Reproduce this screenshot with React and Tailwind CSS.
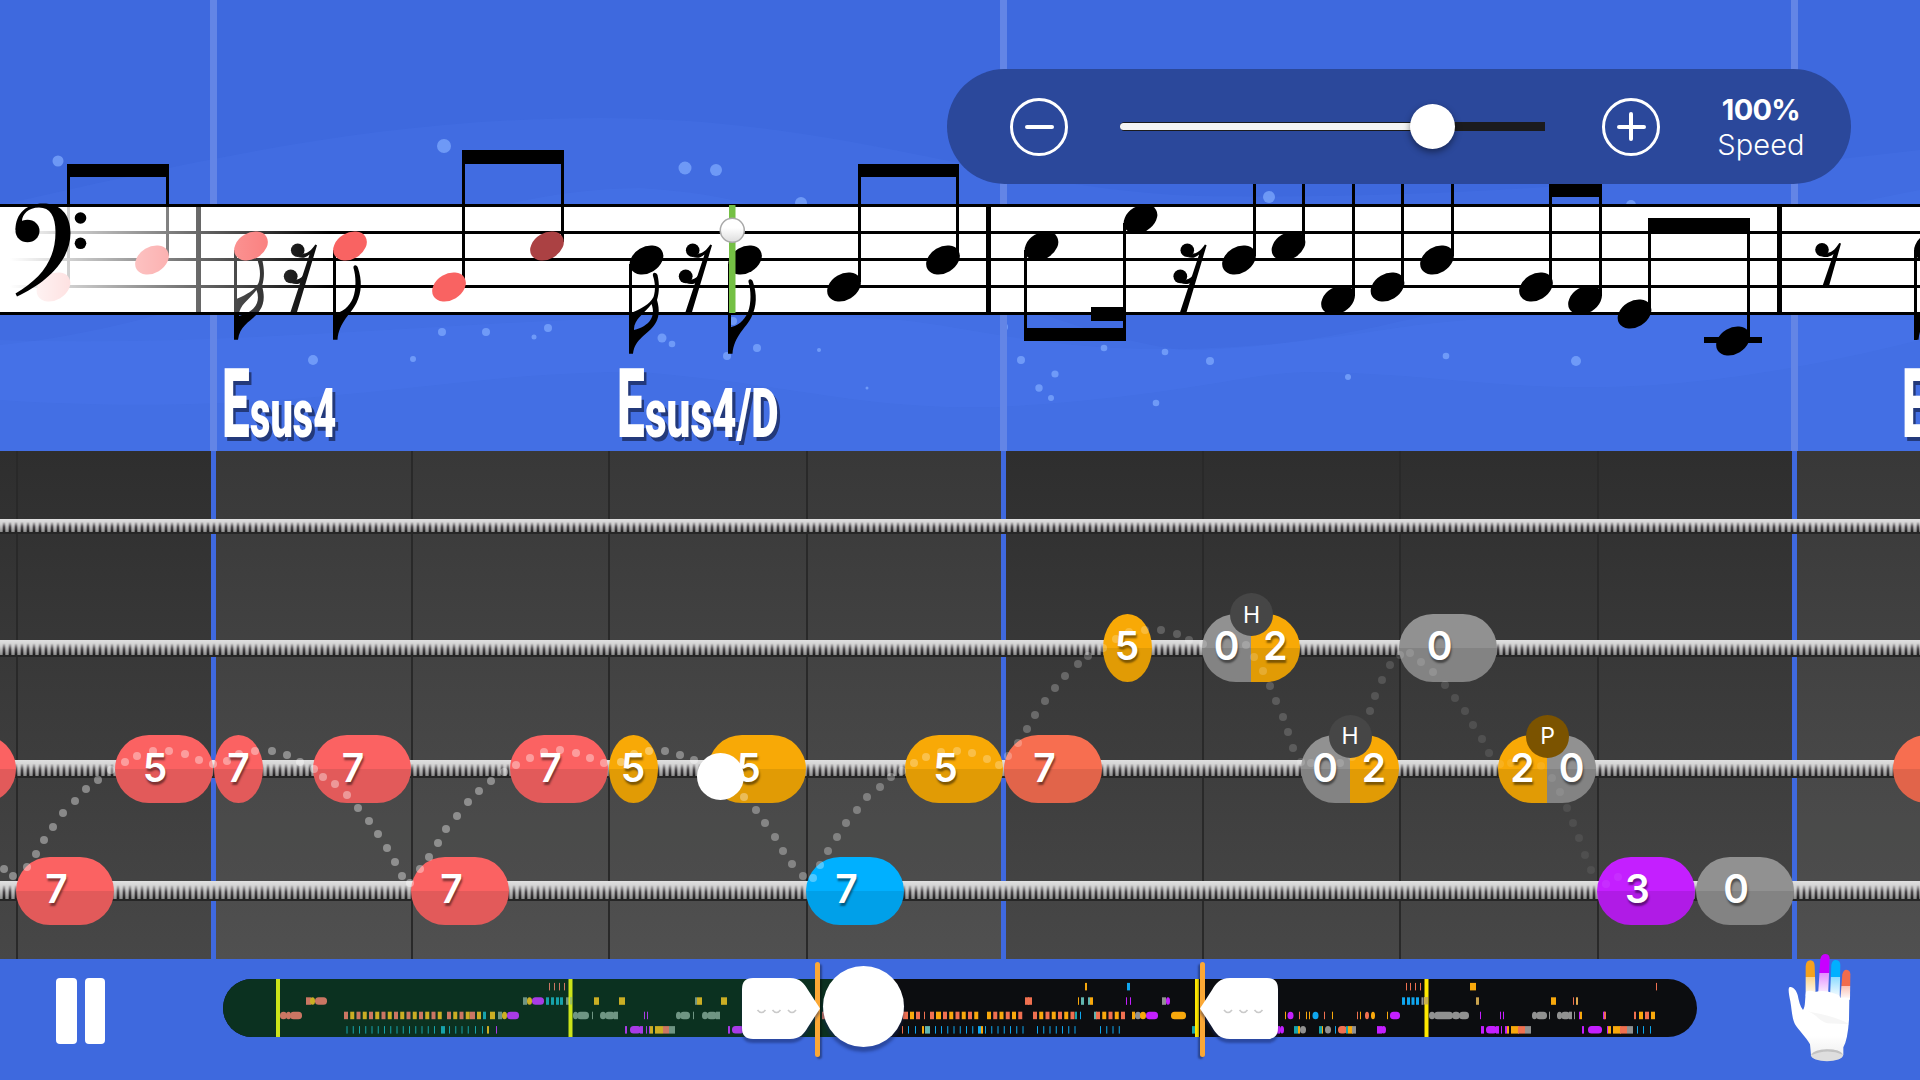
import { clsx } from "clsx";

const RED = "bg-[linear-gradient(#fb6262_50%,#e25a5a_50%)]";
const ORANGE = "bg-[linear-gradient(#f8a906_50%,#e19b05_50%)]";
const CORAL = "bg-[linear-gradient(#f76e50_50%,#e1644a_50%)]";
const BLUE = "bg-[linear-gradient(#00b0ff_50%,#00a0e9_50%)]";
const PURPLE = "bg-[linear-gradient(#c41fff_50%,#b01be6_50%)]";
const GREY = "bg-[linear-gradient(#919191_50%,#838383_50%)]";

// one entry per string, thinnest first
const strings = [
  { size: "h-[15px]", notes: [] },
  {
    size: "h-[17px]",
    notes: [
      { x: 1102.5, short: true, parts: [["5", ORANGE]] },
      { x: 1202, parts: [["0", GREY], ["2", ORANGE]], badge: "H" },
      { x: 1399, parts: [["0", GREY]] },
    ],
  },
  {
    size: "h-[18px]",
    notes: [
      { x: -82.5, parts: [["", RED]] },
      { x: 114.5, parts: [["5", RED]] },
      { x: 214, short: true, parts: [["7", RED]] },
      { x: 312.5, parts: [["7", RED]] },
      { x: 510, parts: [["7", RED]] },
      { x: 608.5, short: true, parts: [["5", ORANGE]] },
      { x: 708, parts: [["5", ORANGE]] },
      { x: 905, parts: [["5", ORANGE]] },
      { x: 1004, parts: [["7", CORAL]] },
      { x: 1300.5, parts: [["0", GREY], ["2", ORANGE]], badge: "H" },
      { x: 1498, parts: [["2", ORANGE], ["0", GREY]], badge: "P" },
      { x: 1893, parts: [["", CORAL]] },
    ],
  },
  {
    size: "h-[20px]",
    notes: [
      { x: 16, parts: [["7", RED]] },
      { x: 411, parts: [["7", RED]] },
      { x: 806, parts: [["7", BLUE]] },
      { x: 1597, parts: [["3", PURPLE]] },
      { x: 1695.5, parts: [["0", GREY]] },
    ],
  },
];

const hops = [
  [4, 869], [13, 876], [27, 867], [36, 854], [44, 840], [53, 827], [63, 813], [75, 801], [86, 789], [98, 780],
  [111, 770], [125, 762], [137, 756], [153, 751], [169, 751], [185, 754], [199, 760], [213, 764], [227, 761],
  [239, 754], [255, 751], [272, 751], [287, 755], [300, 762], [314, 769], [323, 777], [335, 784], [347, 795],
  [358, 808], [369, 821], [378, 834], [387, 848], [395, 862], [402, 876], [410, 883], [420, 869], [429, 857],
  [438, 843], [446, 829], [457, 816], [468, 802], [479, 791], [491, 781], [504, 772], [516, 765], [530, 758],
  [544, 752], [560, 750], [576, 753], [590, 758], [604, 763], [621, 762], [634, 754], [649, 751], [665, 751],
  [680, 755], [694, 760], [744, 797], [756, 810], [765, 823], [775, 837], [783, 851], [792, 864], [803, 876],
  [813, 878], [820, 865], [828, 851], [837, 837], [846, 823], [857, 810], [867, 797], [880, 787], [891, 777],
  [902, 771], [914, 763], [926, 757], [941, 752], [957, 751], [972, 753], [987, 759], [999, 765], [1008, 756],
  [1018, 743], [1027, 729], [1035, 715], [1045, 701], [1055, 688], [1065, 676], [1078, 664], [1088, 656],
  [1103, 648], [1116, 639], [1129, 632], [1145, 630], [1161, 630], [1177, 634], [1189, 640], [1203, 644],
  [1246, 645], [1254, 657], [1263, 671], [1270, 686], [1276, 701], [1283, 717], [1288, 732], [1293, 748],
  [1301, 762], [1311, 763], [1340, 763], [1352, 757], [1358, 743], [1364, 727], [1370, 711], [1375, 696],
  [1382, 680], [1390, 665], [1400, 655], [1410, 653], [1421, 662], [1433, 672], [1445, 685], [1455, 698],
  [1465, 711], [1473, 725], [1482, 739], [1489, 753], [1500, 764], [1511, 763], [1541, 766], [1552, 778],
  [1560, 792], [1567, 808], [1573, 823], [1579, 838], [1585, 855], [1591, 870], [1606, 884], [1618, 877],
];

const bubbles = [
  [58, 161, 5.5], [444, 146, 7], [442, 332, 4], [486, 332, 4], [548, 328, 4], [534, 337, 2.5], [313, 360, 5],
  [413, 359, 3], [685, 168, 6.5], [716, 170, 6], [801, 203, 6], [662, 338, 4.5], [672, 344, 3.3], [757, 348, 4],
  [819, 350, 2], [733, 321, 4], [727, 356, 4], [867, 388, 1.5], [1004, 327, 4], [1021, 360, 4], [1039, 388, 3.7],
  [1269, 197, 6], [1104, 348, 3.3], [1165, 352, 3.3], [1210, 361, 4], [1055, 374, 3.6], [1051, 398, 3],
  [1156, 403, 3.3], [1348, 377, 3], [1446, 356, 3.3], [1576, 361, 5], [1631, 205, 5],
];

const heads = [
  [53.5, 287, "#f96362"], [152, 260, "#f96362"], [251, 246, "#f96362"], [350, 246, "#f96362"],
  [449, 287, "#f96362"], [547, 246, "#ab4143"], [646.5, 260], [745, 260], [844, 287], [943, 260],
  [1041.5, 246], [1140.5, 219], [1239, 260], [1288.5, 246], [1338, 300], [1387.5, 287], [1437, 260],
  [1536, 287], [1585, 300], [1634.5, 314], [1733, 341], [1931, 246],
];

// [x, top, bottom]
const stems = [
  [68.5, 165, 282], [167.5, 165, 256], [235.5, 250, 330], [334.5, 250, 330], [463.5, 151, 282], [562.5, 151, 242],
  [630.5, 264, 340], [729.5, 264, 340], [859.5, 165, 282], [957.5, 165, 256], [1025.5, 250, 340], [1124.5, 223, 340],
  [1254.5, 150, 256], [1303.5, 150, 242], [1353.5, 150, 296], [1402.5, 150, 282], [1452.5, 150, 256],
  [1550.5, 184, 282], [1600.5, 184, 296], [1649.5, 220, 310], [1748.5, 220, 337], [1915.5, 250, 340],
];

// [x, y, width, height]
const beams = [
  [67, 164, 102, 13], [462, 150, 102, 14], [858, 164, 101, 13], [1024, 328, 102, 13], [1091, 307, 35, 14],
  [1549, 184, 53, 13], [1648, 218, 102, 15.5], [1704, 337, 58, 6],
];

const C = "#cb7663", Y = "#cbae24", T = "#17a3ab", P = "#a83be6", G = "#6f9583";
const c = "#f07050", y = "#f8a80c", b = "#0fa6ef", p = "#c41fff", g = "#919191";

// overview map blocks: [row, x, width, colour, rounded]
const blocks = [
  [3, 280, 7, C, 1], [3, 286, 5, C, 1], [3, 290, 12, C, 1], [2, 306, 5, C], [2, 310, 5, Y, 1], [2, 315, 12, C, 1],
  [3, 470, 5, C], [3, 477, 4, Y], [3, 483, 3, T], [3, 490, 5, Y], [3, 498, 4, G], [3, 502, 5, Y, 1],
  [3, 507, 12, P, 1], [4, 441, 4, T], [4, 475, 1, T], [4, 482, 1, T], [4, 487, 2, Y], [4, 496, 1, P],
  [2, 523, 4, G], [2, 527, 5, Y, 1], [2, 532, 12, P, 1], [2, 546, 3, T], [2, 551, 3, T], [2, 556, 3, T],
  [2, 560, 3, T], [2, 566, 3, G], [1, 549, 1, C], [1, 554, 1, C], [1, 559, 1, C], [1, 564, 1, C],
  [3, 573, 5, G, 1], [3, 577, 12, G, 1], [3, 592, 1, G], [3, 600, 6, G, 1], [3, 605, 10, G, 1], [3, 614, 4, G],
  [3, 676, 5, G, 1], [3, 680, 10, G, 1], [3, 693, 1, G], [3, 702, 6, G, 1], [3, 707, 10, G, 1], [3, 716, 4, G],
  [3, 644, 1, P], [3, 647, 1, P], [2, 594, 5, Y], [2, 619, 6, Y], [2, 695, 2, G], [2, 697, 5, Y], [2, 721, 6, Y],
  [4, 625, 2, P], [4, 630, 11, P, 1], [4, 640, 3, P], [4, 646, 1, P], [4, 649, 1, P], [4, 650, 3, Y],
  [4, 655, 8, Y], [4, 663, 6, C], [4, 669, 6, G], [4, 728, 2, P], [4, 732, 12, P, 1], [3, 822, 3, C], [4, 815, 2, C],
  [3, 903, 5, c], [3, 910, 4, y], [3, 916, 4, c], [3, 924, 1, c], [3, 930, 4, c], [3, 936, 5, y],
  [4, 902, 1, c], [4, 908, 1, b], [4, 915, 1, b], [4, 922, 2, y], [4, 925, 5, "#62b6b0"], [4, 935, 1, b],
  [4, 978, 3, b], [4, 981, 2, y], [3, 1075, 2, T], [3, 1080, 1, b], [3, 1094, 3, "#62b6b0"], [3, 1132, 3, y],
  [3, 1135, 6, g, 1], [3, 1140, 6, y, 1], [3, 1146, 12, p, 1], [3, 1171, 15, y, 1], [4, 1192, 7, T],
  [2, 1025, 4, c], [2, 1028, 4, c], [2, 1078, 1, y], [2, 1081, 3, "#62b6b0"], [2, 1088, 2, "#62b6b0"],
  [2, 1090, 3, y], [2, 1126, 1, p], [2, 1130, 1, p], [2, 1162, 4, g], [2, 1166, 4, p, 1], [1, 1085, 2, y],
  [1, 1127, 3, b], [4, 1277, 3, p], [4, 1280, 4, p, 1], [3, 1285, 1, y], [3, 1287.5, 6, p, 1], [3, 1299, 1, c],
  [3, 1306, 1, y], [3, 1309, 1, y], [3, 1312.5, 6, b, 1], [3, 1324, 1, c], [3, 1332, 1, y], [4, 1294, 4, T],
  [4, 1298, 2, y], [4, 1300, 6, g, 1], [4, 1319, 3, T], [4, 1322, 1, y], [4, 1325, 6, g, 1], [4, 1335, 1, b],
  [4, 1338, 9, c, 1], [4, 1346, 2, T], [4, 1348, 5, y], [4, 1352, 4, g], [3, 1357, 1, c], [3, 1360, 1, y],
  [3, 1365, 4, c, 1], [3, 1371, 4, y, 1], [3, 1387, 1, y], [3, 1390, 10, p, 1], [4, 1377, 5, p], [4, 1381, 5, p, 1],
  [1, 1406, 1, c], [1, 1410, 1, c], [1, 1415, 1, c], [1, 1420, 1, c], [2, 1402, 3, b], [2, 1407, 3, b],
  [2, 1411.5, 3, b], [2, 1416, 3, b], [2, 1421.5, 2, g], [3, 1429, 6, g, 1], [3, 1434, 19, g, 1],
  [3, 1452, 8, g, 1], [3, 1459, 10, g, 1], [3, 1480, 1, p], [3, 1500, 1, p], [3, 1503, 1, p], [3, 1532, 5, g, 1],
  [3, 1536, 11, g, 1], [3, 1549, 1, g], [3, 1557, 5, g, 1], [3, 1561, 9, g, 1], [3, 1569, 3, g], [3, 1574, 1, g],
  [3, 1579, 1, p], [3, 1580, 2, y], [3, 1603, 2, p], [3, 1604, 2, c], [3, 1634, 2, c], [3, 1639, 4, y],
  [3, 1645, 4, c], [3, 1651, 4, y], [1, 1470, 6, y], [1, 1656, 1, c], [2, 1476, 3, "#c9a24e"], [2, 1551, 5, y],
  [2, 1573, 1, c], [2, 1576, 2, "#e0a84e"], [4, 1481, 3, p], [4, 1486, 11, p, 1], [4, 1496, 3, p], [4, 1501, 1, p],
  [4, 1505, 2, p], [4, 1507, 2, y], [4, 1511, 8, y], [4, 1518, 7, c], [4, 1525, 6, g], [4, 1582, 2, p],
  [4, 1588, 14, p, 1], [4, 1607, 1, p], [4, 1608, 3, y], [4, 1613, 8, y], [4, 1620, 7, c], [4, 1627, 6, g],
  [4, 1637, 1, b], [4, 1643, 1, b], [4, 1650, 1, b],
];

// evenly spaced runs on the overview map: [row, from, to, width, colours]
const runs = [
  [3, 344, 440, 4, [C, Y]],
  [3, 447, 470, 4, [C, Y]],
  [4, 346.5, 436, 1, [T]],
  [4, 449, 470, 1, [T]],
  [3, 943, 976, 4, [c, y]],
  [3, 987, 1022, 4, [y, c]],
  [3, 1033, 1074, 4, [c, y]],
  [3, 1096, 1124, 4, [c, y]],
  [4, 941, 974, 1, [b]],
  [4, 985, 1023, 1, [b]],
  [4, 1037, 1075, 1, [b]],
  [4, 1100, 1121, 1, [b]],
];

runs.forEach(([row, from, to, width, colours]) => {
  for (let x = from, i = 0; x <= to; x += 6.25, i++) {
    blocks.push([row, x, width, colours[i % colours.length]]);
  }
});

export default function App() {
  return (
    <div className="flex h-[1080px] w-[1920px] flex-col overflow-hidden bg-[#3e69de] font-['Inter',sans-serif] text-white">
      <section className="relative h-[451px] shrink-0">
        <Score />
        <Chord x="left-[222px]" ext="sus4" stretch="scale-x-[.585]" />
        <Chord x="left-[617px]" ext="sus4/D" stretch="scale-x-[.62]" />
        <Chord x="left-[1902px]" />
        <SpeedControl />
      </section>
      <Fretboard />
      <Footer />
    </div>
  );
}

function Score() {
  return (
    <svg viewBox="0 0 1920 451" className="h-[451px] w-[1920px]">
      <defs>
        <linearGradient id="fade" x1="0" x2="1">
          <stop offset="0.03" stopColor="#fff" />
          <stop offset="1" stopColor="#fff" stopOpacity="0" />
        </linearGradient>
        <linearGradient id="knob" x1="0" x2="0" y1="0" y2="1">
          <stop offset="0.4" stopColor="#fff" />
          <stop offset="1" stopColor="#dcdcdc" />
        </linearGradient>
      </defs>

      {/* Water */}
      <g fill="#5b8aff" fillOpacity="0.11">
        <path d="M0 205 C200 160 380 118 600 118 C850 118 1000 190 1200 196 C1500 200 1700 175 1920 150 V451 H0Z" />
        <path d="M0 345 C250 320 420 190 640 188 C860 200 980 320 1180 350 C1400 350 1600 250 1920 190 V451 H0Z" />
        <path d="M0 400 C300 420 450 370 640 372 C800 385 860 410 1000 407 C1200 395 1250 370 1320 372 C1500 375 1600 420 1920 340 V320 C1600 310 1500 310 1350 335 C1100 370 1000 330 900 320 C600 300 300 350 0 340Z" />
      </g>
      <g fill="#82adff" fillOpacity="0.7">
        {bubbles.map(([x, y, r]) => (
          <circle key={`${x}-${y}`} cx={x} cy={y} r={r} />
        ))}
      </g>
      <g fill="#6385e6">
        <rect x="210" width="7" height="451" />
        <rect x="1000" width="7" height="451" />
        <rect x="1791" width="7" height="451" />
      </g>

      {/* Staff */}
      <rect y="205" width="1920" height="109" fill="#fff" />
      {[205.5, 232.5, 259.5, 286.5, 313.5].map((y) => (
        <rect key={y} y={y - 1.5} width="1920" height="3" />
      ))}
      {[196, 986, 1777].map((x) => (
        <rect key={x} x={x} y="205" width="5" height="108" />
      ))}
      {stems.map(([x, top, bottom]) => (
        <rect key={x} x={x - 1.5} y={top} width="3" height={bottom - top} />
      ))}
      {beams.map(([x, y, w, h]) => (
        <rect key={`${x}-${y}`} x={x} y={y} width={w} height={h} />
      ))}
      {heads.map(([x, y, fill = "#000"]) => (
        <ellipse key={x} cx={x} cy={y} rx="18" ry="13" fill={fill} transform={`rotate(-31 ${x} ${y})`} />
      ))}
      <DoubleFlag x={-395} y={-14} />
      <SingleFlag x={-395} y={-14} />
      <DoubleFlag x={0} y={0} />
      <SingleFlag x={0} y={0} />
      <SingleFlag x={1186} y={-14} />
      <SixteenthRest x={-395} />
      <SixteenthRest x={0} />
      <SixteenthRest x={494.6} />
      <g>
        <circle cx="1822" cy="249.7" r="6.8" />
        <path d="M1839.3 243 L1841 243.6 L1829 286 H1822.5 L1833.5 254 C1829 257.5 1826 257.5 1822 256.4 L1828.5 252.5 C1833 252 1836 248 1839.3 243Z" />
      </g>

      <rect y="207" width="330" height="105" fill="url(#fade)" />

      {/* Bass clef */}
      <path d="M15.5 230 C15.5 213 27 203.5 43 203.5 C60 203.5 70.5 214 70.5 233 C70.5 262 44 284 17 296.5 L15.5 293.5 C40 279 55.5 261 55.5 232 C55.5 216 50 207.5 39 207.5 C28 207.5 21.5 215 22 222Z" />
      <ellipse cx="27.5" cy="231" rx="12" ry="11.2" />
      <circle cx="80.5" cy="218" r="5.8" />
      <circle cx="80.5" cy="243.3" r="5.8" />

      {/* Playhead */}
      <rect x="729" y="205" width="6.5" height="108" fill="#74c044" />
      <circle cx="732.3" cy="230.3" r="12" fill="url(#knob)" stroke="#a9a9a9" strokeWidth="1.5" />
    </svg>
  );
}

function SingleFlag({ x, y }) {
  return (
    <path
      transform={`translate(${x} ${y})`}
      d="M728 328 C738 326 744 321 748 312 C751.5 303 751 290 748.5 282 C748 278.5 752 278 753 282 C757 294 757 306 751.5 317 C746 328 734 336 732.5 353.7 H728Z"
    />
  );
}

function DoubleFlag({ x, y }) {
  return (
    <path
      transform={`translate(${x} ${y})`}
      fillRule="evenodd"
      d="M629 314 C641 309 650 304 653.5 297 C656 290 655 282 653 276 C652 272 656 271.5 657.5 275 C659.5 284 659.5 292 657 300 C660 310 659 318 655 324 C648 335 635 338 633 353.7 H629Z M634 329 C634 319 645 313 651.5 304 C656 316 650 326 634 330Z"
    />
  );
}

function SixteenthRest({ x }) {
  return (
    <g transform={`translate(${x} 0)`}>
      <circle cx="692.7" cy="250.3" r="6.8" />
      <circle cx="685.7" cy="276.3" r="6.9" />
      <path d="M710.3 244.5 L712 245.3 L692 312 H685.5 L704.5 254.5 C700 258.5 697 258.3 692.7 257 L699 253.5 C704 253 707 249 710.3 244.5Z" />
      <path d="M686 283 L692 279.5 C695 279 697.5 277 700 273 L697 282 C693 284.8 690 284.5 686 283Z" />
    </g>
  );
}

function Chord({ x, ext, stretch }) {
  return (
    <div
      className={clsx(
        "absolute top-[341px] flex items-baseline font-['Roboto',sans-serif] font-black leading-[1.3] [text-shadow:5px_4px_0_#23397a]",
        x
      )}
    >
      <span className="-mr-[26px] origin-left scale-x-[.51] text-[97px]">E</span>
      {ext && <span className={clsx("origin-left text-[68px]", stretch)}>{ext}</span>}
    </div>
  );
}

function SpeedControl() {
  return (
    <div className="absolute left-[947px] top-[69px] flex h-[115px] w-[904px] items-center rounded-full bg-[#2b489b] pl-[63px]">
      <button className="flex size-[58px] items-center justify-center rounded-full border-[3px] border-white">
        <span className="h-[4px] w-[29px] rounded-full bg-white" />
      </button>
      <div className="relative ml-[52px] flex h-[9px] w-[425px] items-center rounded-l-full bg-[#1b1b1d]">
        <div className="h-[7px] w-[300px] rounded-l-full bg-[#f4f4f4]" />
        <div className="absolute left-[290px] size-[45px] rounded-full bg-white shadow-[0_3px_7px_rgba(0,0,0,0.45)]" />
      </div>
      <button className="relative ml-[57px] flex size-[58px] items-center justify-center rounded-full border-[3px] border-white">
        <span className="h-[4px] w-[29px] rounded-full bg-white" />
        <span className="absolute h-[29px] w-[4px] rounded-full bg-white" />
      </button>
      <div className="ml-[41px] w-[120px] text-center text-[29px] leading-[35px]">
        <p className="font-bold tracking-[-0.7px]">100%</p>
        <p className="font-light tracking-[0.1px]">Speed</p>
      </div>
    </div>
  );
}

function Fretboard() {
  return (
    <section className="relative h-[508px] shrink-0 overflow-hidden bg-[linear-gradient(#2e2e2e,#474747)] pt-[15px]">
      {/* Measures and beats */}
      <div className="absolute inset-0 flex">
        <div className="w-[214px] shrink-0" />
        <div className="w-[790px] shrink-0 bg-white/5" />
        <div className="w-[791px] shrink-0" />
        <div className="flex-1 bg-white/5" />
      </div>
      {[16, 411, 608, 806, 1202, 1399, 1597].map((x) => (
        <div key={x} className="absolute inset-y-0 w-[2px] bg-[#292929]" style={{ left: x }} />
      ))}
      {[211, 1001, 1792].map((x) => (
        <div key={x} className="absolute inset-y-0 w-[5px] bg-[#3f69df]" style={{ left: x }} />
      ))}

      {strings.map((string, i) => (
        <div key={i} className="relative flex h-[121.4px] items-center">
          <div
            className={clsx(
              "flex w-full border-b-[2px] border-[#262626] bg-[linear-gradient(#e0e0e0,#cfcfcf_40%,#8c8c8c)]",
              string.size
            )}
          >
            {/* Winding */}
            <div className="flex-1 bg-[linear-gradient(transparent_22%,#4a464a_62%,#1c1c1c)] [mask-image:repeating-linear-gradient(90deg,transparent_0px,transparent_2px,#000_3.5px,#000_4.5px,transparent_6px)]" />
          </div>
          {string.notes.map((note) => (
            <Note key={note.x} {...note} />
          ))}
        </div>
      ))}

      <svg viewBox="0 451 1920 508" className="pointer-events-none absolute inset-0 h-[508px] w-[1920px]">
        {hops.map(([x, y]) => (
          <circle key={x} cx={x} cy={y} r="4" fill="#fff" opacity={x < 600 ? 0.38 : Math.max(0.05, 0.38 - (x - 600) / 3200)} />
        ))}
      </svg>
      {strings.map((string, i) =>
        string.notes.map((note) => <NoteLabels key={`${i}-${note.x}`} row={i} {...note} />)
      )}
      <div className="absolute left-[697px] top-[302px] size-[47px] rounded-full bg-white" />
    </section>
  );
}

function Note({ x, short, parts }) {
  return (
    <div
      className={clsx("absolute flex h-[68px] overflow-hidden", short ? "w-[49px] rounded-[50%]" : "w-[98px] rounded-full")}
      style={{ left: x }}
    >
      {parts.map(([, colour], i) => (
        <div key={i} className={clsx("flex-1", colour)} />
      ))}
    </div>
  );
}

// drawn apart from the pills so the hop trail runs between them and the digits
function NoteLabels({ x, row, short, parts, badge }) {
  return (
    <div
      className={clsx("absolute flex h-[68px] items-center", short ? "w-[49px]" : "w-[98px]")}
      style={{ left: x, top: 40 + row * 121.4 }}
    >
      {parts.map(([label], i) => (
        <span
          key={i}
          className={clsx(
            "flex-1 text-center text-[39px] font-semibold leading-[68px] [text-shadow:1px_3px_2px_rgba(0,0,0,0.45)]",
            !short && parts.length === 1 && "pr-[17px]"
          )}
        >
          {label}
        </span>
      ))}
      {badge && (
        <span
          className={clsx(
            "absolute -top-[19px] left-[28px] flex size-[43px] items-center justify-center rounded-full text-[23px]",
            badge === "P" ? "bg-[#7b5300]" : "bg-[#464646]"
          )}
        >
          {badge}
        </span>
      )}
    </div>
  );
}

function Footer() {
  return (
    <footer className="relative z-10 flex h-[121px] shrink-0 items-start bg-[#3e69de] pl-[56px]">
      <button className="mt-[19px] flex gap-[8px]">
        <span className="h-[66px] w-[20.5px] rounded-[4px] bg-white" />
        <span className="h-[66px] w-[20.5px] rounded-[4px] bg-white" />
      </button>
      <div className="relative ml-[118px] mt-[20px] h-[58px] w-[1474px]">
        <div className="flex h-full overflow-hidden rounded-full bg-[#0c0d10]">
          <div className="w-[640px] bg-[#0b3120]" />
        </div>
        <svg viewBox="223 979 1474 58" className="absolute inset-0 h-[58px] w-[1474px]">
          {blocks.map(([row, x, w, fill, round], i) => (
            <rect key={i} x={x} y={968.5 + row * 14.4} width={w} height="7.5" rx={round ? 3.5 : 0} fill={fill} />
          ))}
          <rect x="276" y="979" width="4" height="58" fill="#cce419" />
          <rect x="568.5" y="979" width="4" height="58" fill="#cce419" />
          <rect x="1195" y="979" width="4" height="58" fill="#ffe800" />
          <rect x="1424.5" y="979" width="4" height="58" fill="#ffe800" />
          <rect x="570" y="997" width="2" height="7.5" fill="#9fc060" />
          <rect x="1424" y="997" width="4" height="7.5" fill="#c9b04e" />
        </svg>
        <div className="absolute -top-[17px] left-[592px] h-[95px] w-[5px] rounded-sm bg-[#fba835] shadow-[2px_2px_2px_rgba(0,0,0,0.35)]" />
        <div className="absolute -top-[17px] left-[977px] h-[95px] w-[5px] rounded-sm bg-[#fba835] shadow-[-2px_2px_2px_rgba(0,0,0,0.35)]" />
        <LoopHandle className="left-[519px]" />
        <LoopHandle className="left-[977px]" flip />
        <div className="absolute -top-[13px] left-[600px] size-[81px] rounded-full bg-white shadow-[0_5px_3px_rgba(20,35,90,0.45)]" />
      </div>
      <Hand />
    </footer>
  );
}

function LoopHandle({ className, flip }) {
  return (
    <svg
      viewBox="0 0 78 61"
      className={clsx(
        "absolute -top-px h-[61px] w-[78px] overflow-visible drop-shadow-[0_4px_1px_rgba(20,35,90,0.45)]",
        flip && "-scale-x-100",
        className
      )}
    >
      <path
        d="M11 0 H48 C58 0 62 5 66 12 L78 30.5 L66 49 C62 56 58 61 48 61 H11 Q0 61 0 50 V11 Q0 0 11 0Z"
        fill="#fff"
      />
      <g fill="none" stroke="#cacaca" strokeWidth="1.7">
        <path d="M15.5 32 Q19.5 37 23.5 32" />
        <path d="M30.5 32 Q34.5 37 38.5 32" />
        <path d="M46 32 Q50 37 54 32" />
      </g>
    </svg>
  );
}

function Hand() {
  return (
    <svg viewBox="680 820 195 330" className="ml-[90px] -mt-[6px] h-[110px] w-[65px]">
      <defs>
        <linearGradient id="index" x1="0" x2="0" y1="0" y2="1">
          <stop offset="0.45" stopColor="#f5a21d" />
          <stop offset="0.46" stopColor="#fbd58c" />
          <stop offset="1" stopColor="#fff" />
        </linearGradient>
        <linearGradient id="middle" x1="0" x2="0" y1="0" y2="1">
          <stop offset="0.45" stopColor="#c800ff" />
          <stop offset="0.46" stopColor="#e391ff" />
          <stop offset="1" stopColor="#fff" />
        </linearGradient>
        <linearGradient id="ring" x1="0" x2="0" y1="0" y2="1">
          <stop offset="0.45" stopColor="#00b0ff" />
          <stop offset="0.46" stopColor="#8fdcff" />
          <stop offset="1" stopColor="#fff" />
        </linearGradient>
        <linearGradient id="pinky" x1="0" x2="0" y1="0" y2="1">
          <stop offset="0.55" stopColor="#f26b4c" />
          <stop offset="0.56" stopColor="#fbc4b8" />
          <stop offset="1" stopColor="#fff" />
        </linearGradient>
        <linearGradient id="palm" x1="0" x2="0" y1="0" y2="1">
          <stop offset="0.7" stopColor="#fff" />
          <stop offset="1" stopColor="#f0f0f0" />
        </linearGradient>
      </defs>
      <path d="M736 950 V860 Q737 842 750 842 Q763 842 763 860 L766 950Z" fill="url(#index)" />
      <path d="M773 950 L780 838 Q783 823 796 823 Q809 824 808 840 L803 950Z" fill="url(#middle)" />
      <path d="M809 955 L813 855 Q816 840 827 841 Q840 842 840 856 L838 955Z" fill="url(#ring)" />
      <path d="M840 960 L846 884 Q849 870 858 870 Q870 871 870 884 L869 960Z" fill="url(#pinky)" />
      <path
        d="M737 936 Q750 930 764 937 Q785 931 805 936 Q820 940 836 947 L840 954 Q855 952 867 955 L866 1020 Q862 1080 849 1103 V1126 Q800 1136 752 1126 L749 1094 C735 1070 715 1052 704 1034 C695 1015 695 995 690 965 C686 945 682 926 688 922 C699 920 708 932 712 946 C716 965 719 980 728 991 C736 980 733 960 737 936Z"
        fill="url(#palm)"
      />
      <path d="M740 995 C765 1000 777 1025 800 1031 L866 1034 C840 1015 790 1005 740 995Z" fill="#f6f6f6" />
      <ellipse cx="800" cy="1127" rx="48" ry="18" fill="#dedede" />
      <path d="M752 1127 Q760 1110 800 1109 Q840 1109 848 1125 Q800 1105 752 1127Z" fill="#c2c2c2" />
    </svg>
  );
}
